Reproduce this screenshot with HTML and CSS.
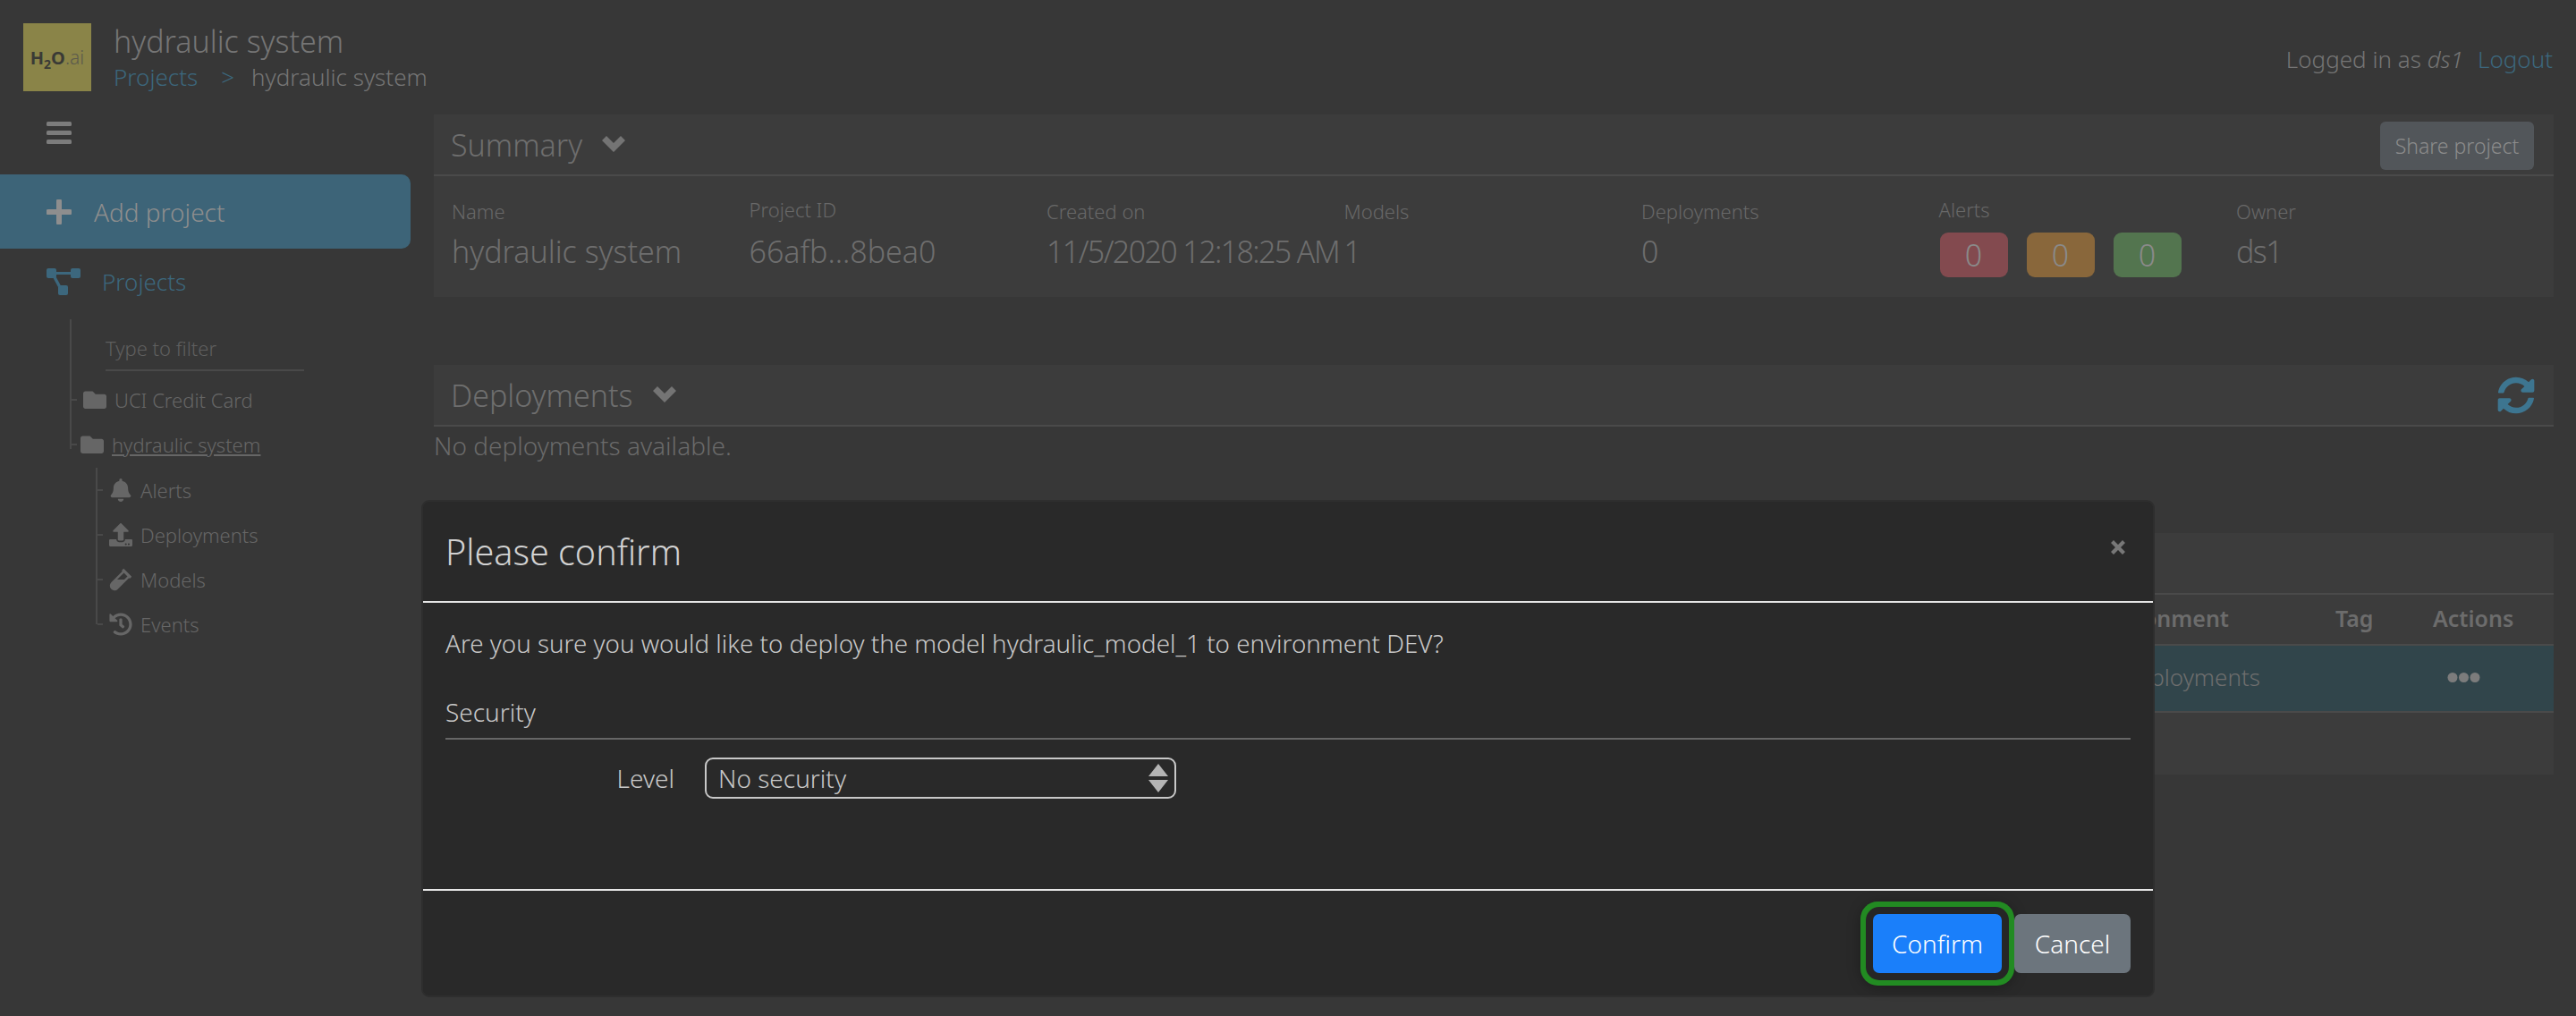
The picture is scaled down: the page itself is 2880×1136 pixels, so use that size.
FILE: index.html
```html
<!DOCTYPE html>
<html>
<head>
    <title>hydraulic system</title>
    <link rel="stylesheet" href="styles.css">
</head>
<body>
<!-- Top bar -->
<header class="topbar">
    <div class="logo"><b>H<sub>2</sub>O</b><span>.ai</span></div>
    <div class="titles">
        <div class="app-title">hydraulic system</div>
        <div class="crumbs"><a>Projects</a><a class="crumb-sep">&gt;</a><span>hydraulic system</span></div>
    </div>
    <div class="login">Logged in as <i>ds1</i><a>Logout</a></div>
</header>

<div class="layout">
    <!-- Sidebar -->
    <nav class="sidebar">
        <svg class="burger" viewBox="0 0 28 25"><rect y="0" width="28" height="5" rx="1.5"/><rect y="10" width="28" height="5" rx="1.5"/><rect y="20" width="28" height="5" rx="1.5"/></svg>
        <div class="add-project">
            <svg viewBox="0 0 28 28"><path d="M11 2a3 3 0 0 1 6 0v9h9a3 3 0 0 1 0 6h-9v9a3 3 0 0 1-6 0v-9H2a3 3 0 0 1 0-6h9z"/></svg>
            <span>Add project</span>
        </div>
        <div class="projects-link">
            <svg viewBox="0 0 38 30"><rect x="0" y="0" width="11" height="11" rx="2"/><rect x="27" y="0" width="11" height="11" rx="2"/><rect x="13" y="19" width="11" height="11" rx="2"/><path d="M8 4h22v3H8zM6 8l3-1.500 7 13-3 1.500z"/></svg>
            <span>Projects</span>
        </div>
        <div class="tree">
            <div class="filter"><span>Type to filter</span></div>
            <div class="tree-row"><i class="tick"></i><svg class="folder" viewBox="0 0 512 390"><path d="M464 70H272l-64-64H48C21.490 6 0 27.490 0 54v288c0 26.510 21.490 48 48 48h416c26.510 0 48-21.490 48-48V118c0-26.510-21.490-48-48-48z"/></svg><span>UCI Credit Card</span></div>
            <div class="tree-row row-current"><i class="tick"></i><svg class="folder" viewBox="0 0 512 390"><path d="M464 70H272l-64-64H48C21.490 6 0 27.490 0 54v288c0 26.510 21.490 48 48 48h416c26.510 0 48-21.490 48-48V118c0-26.510-21.490-48-48-48z"/></svg><u>hydraulic system</u></div>
        </div>
        <div class="subtree">
            <div class="tree-row"><i class="tick"></i><svg class="sub-icon" viewBox="0 0 448 512"><path d="M224 512c35.320 0 63.970-28.650 63.970-64H160.030c0 35.350 28.650 64 63.970 64zm215.390-149.710c-19.320-20.760-55.470-51.990-55.470-154.290 0-77.700-54.480-139.900-127.940-155.160V32c0-17.670-14.320-32-31.980-32s-31.980 14.330-31.980 32v20.840C118.560 68.100 64.080 130.300 64.080 208c0 102.300-36.150 133.530-55.470 154.290-6 6.450-8.660 14.160-8.610 21.710.11 16.400 12.980 32 32.100 32h383.800c19.120 0 32-15.600 32.100-32 .05-7.550-2.610-15.270-8.610-21.710z"/></svg><span>Alerts</span></div>
            <div class="tree-row"><i class="tick"></i><svg class="sub-icon" viewBox="0 0 512 512"><path d="M296 384h-80c-13.300 0-24-10.700-24-24V192h-87.700c-17.800 0-26.700-21.500-14.100-34.100L242.300 5.700c7.500-7.500 19.800-7.500 27.300 0l152.200 152.200c12.600 12.600 3.700 34.100-14.100 34.100H320v168c0 13.300-10.700 24-24 24zm216-8v112c0 13.300-10.700 24-24 24H24c-13.300 0-24-10.700-24-24V376c0-13.300 10.700-24 24-24h136v8c0 30.900 25.100 56 56 56h80c30.900 0 56-25.100 56-56v-8h136c13.300 0 24 10.700 24 24zm-124 88c0-11-9-20-20-20s-20 9-20 20 9 20 20 20 20-9 20-20zm64 0c0-11-9-20-20-20s-20 9-20 20 9 20 20 20 20-9 20-20z"/></svg><span>Deployments</span></div>
            <div class="tree-row"><i class="tick"></i><svg class="sub-icon" viewBox="0 0 480 512"><path d="M477.700 186.100L309.500 18.300c-3.100-3.100-8.200-3.100-11.300 0l-34 33.900c-3.100 3.100-3.100 8.200 0 11.300l11.200 11.100L33 316.500c-38.800 38.700-45.100 102-9.400 143.500 20.600 24 49.500 36 78.400 35.900 26.400 0 52.800-10 72.900-30.100l246.300-245.700 11.200 11.100c3.100 3.100 8.200 3.100 11.300 0l34-33.900c3.100-3 3.100-8.100-.1-11.200zM318 256H161l148-147.700 78.500 78.300L318 256z"/></svg><span>Models</span></div>
            <div class="tree-row"><i class="tick"></i><svg class="sub-icon" viewBox="0 0 512 512"><path d="M504 255.531c.253 136.640-111.180 248.372-247.820 248.468-59.015.042-113.223-20.530-155.822-54.911-11.077-8.940-11.905-25.541-1.839-35.607l11.267-11.267c8.609-8.609 22.353-9.551 31.891-1.984C173.062 425.135 212.781 440 256 440c101.705 0 184-82.311 184-184 0-101.705-82.311-184-184-184-48.814 0-93.149 18.969-126.068 49.932l50.754 50.754c10.080 10.080 2.941 27.314-11.313 27.314H24c-8.837 0-16-7.163-16-16V38.627c0-14.254 17.234-21.393 27.314-11.314l49.372 49.372C129.209 34.136 189.552 8 256 8c136.810 0 247.747 110.780 248 247.531zm-180.912 78.784l9.823-12.630c8.138-10.463 6.253-25.542-4.210-33.679L288 256.349V152c0-13.255-10.745-24-24-24h-16c-13.255 0-24 10.745-24 24v135.651l65.409 50.874c10.463 8.137 25.541 6.253 33.679-4.210z"/></svg><span>Events</span></div>
        </div>
    </nav>

    <!-- Main content -->
    <main class="content">
        <section class="panel summary">
            <div class="panel-head">
                <span class="panel-title">Summary</span>
                <svg class="chevron" viewBox="0 0 26 18"><path d="M0 5l5-5 8 8 8-8 5 5-13 13z"/></svg>
                <button class="share">Share project</button>
            </div>
            <div class="facts">
                <div><label>Name</label><div class="value">hydraulic system</div></div>
                <div><label class="label-up">Project ID</label><div class="value">66afb...8bea0</div></div>
                <div><label>Created on</label><div class="value value-date">11/5/2020 12:18:25 AM</div></div>
                <div><label>Models</label><div class="value">1</div></div>
                <div><label>Deployments</label><div class="value">0</div></div>
                <div>
                    <label class="label-up">Alerts</label>
                    <div class="badges"><span class="badge red">0</span><span class="badge orange">0</span><span class="badge green">0</span></div>
                </div>
                <div><label>Owner</label><div class="value value-owner">ds1</div></div>
            </div>
        </section>

        <section class="deployments">
            <div class="panel-head panel">
                <span class="panel-title">Deployments</span>
                <svg class="chevron" viewBox="0 0 26 18"><path d="M0 5l5-5 8 8 8-8 5 5-13 13z"/></svg>
                <svg class="refresh" viewBox="0 0 512 512"><path d="M370.720 133.280C339.458 104.008 298.888 87.962 255.848 88c-77.458.068-144.328 53.178-162.791 126.850-1.344 5.363-6.122 9.150-11.651 9.150H24.103c-7.498 0-13.194-6.807-11.807-14.176C33.933 94.924 134.813 8 256 8c66.448 0 126.791 26.136 171.315 68.685L463.030 40.970C478.149 25.851 504 36.559 504 57.941V192c0 13.255-10.745 24-24 24H345.941c-21.382 0-32.090-25.851-16.971-40.971l41.750-41.749zM32 296h134.059c21.382 0 32.090 25.851 16.971 40.971l-41.750 41.750c31.262 29.273 71.835 45.319 114.876 45.280 77.418-.07 144.315-53.144 162.787-126.849 1.344-5.363 6.122-9.150 11.651-9.150h57.304c7.498 0 13.194 6.807 11.807 14.176C478.067 417.076 377.187 504 256 504c-66.448 0-126.791-26.136-171.315-68.685L48.970 471.030C33.851 486.149 8 475.441 8 454.059V320c0-13.255 10.745-24 24-24z"/></svg>
            </div>
            <p class="empty">No deployments available.</p>
        </section>

        <section class="panel models">
            <div class="models-head"></div>
            <div class="models-row models-th">
                <div class="col-env">Environment</div><div class="col-tag">Tag</div><div class="col-act">Actions</div>
            </div>
            <div class="models-row models-td">
                <div class="col-env">Deployments</div><div class="col-tag"></div>
                <div class="col-act"><svg class="dots" viewBox="0 0 37 13"><circle cx="6" cy="6.500" r="5.500"/><circle cx="18.500" cy="6.500" r="5.500"/><circle cx="31" cy="6.500" r="5.500"/></svg></div>
            </div>
        </section>
    </main>
</div>

<!-- Confirm dialog -->
<div class="modal">
    <div class="modal-head">
        <h5>Please confirm</h5>
        <svg class="close" viewBox="0 0 18 18"><path d="M1 4l3-3 5 5 5-5 3 3-5 5 5 5-3 3-5-5-5 5-3-3 5-5z"/></svg>
    </div>
    <div class="modal-body">
        <p>Are you sure you would like to deploy the model hydraulic_model_1 to environment DEV?</p>
        <div class="legend">Security</div>
        <div class="form-row">
            <label>Level</label>
            <div class="select">
                <span>No security</span>
                <svg viewBox="0 0 24 34"><path d="M12 1l11 14H1zM1 19h22L12 33z"/></svg>
            </div>
        </div>
    </div>
    <div class="modal-foot">
        <button class="btn btn-confirm">Confirm</button>
        <button class="btn btn-cancel">Cancel</button>
    </div>
</div>
</body>
</html>
```

FILE: styles.css
```css
body {
    margin: 0;
    height: 1136px;
    overflow: hidden;
    background: #373737;
    color: #757575;
    font-family: "Noto Sans", "Open Sans", sans-serif;
    font-size: 26px;
    font-weight: 300;
}

a { color: #3c677d; }

/* Top bar */
.topbar {
    height: 128px;
    display: flex;
    align-items: flex-start;
    box-sizing: border-box;
    padding: 26px 26px 0 26px;
}

.logo {
    width: 76px;
    height: 76px;
    background: #8a8448;
    color: #3a3a36;
    display: flex;
    align-items: center;
    justify-content: center;
    font-size: 20px;
    box-sizing: border-box;
}

.logo b { font-weight: 700; }
.logo sub { font-size: 14px; line-height: 0; }
.logo span { color: #5c5b4c; font-size: 21px; }

.titles { margin-left: 25px; margin-top: -2px; }
.app-title { font-size: 34px; line-height: 44px; }
.crumbs { display: flex; line-height: 36px; }
.crumb-sep { margin: 0 19px 0 26px; }

.login { margin-left: auto; margin-top: 22px; margin-right: 0; white-space: nowrap; }
.login a { margin-left: 16px; }

.layout { display: flex; }

/* Sidebar */
.sidebar { width: 485px; flex: none; }
.sidebar svg { fill: currentColor; }

.burger { display: block; width: 28px; height: 25px; margin: 8px 0 34px 52px; color: #7c7c7c; }

.add-project {
    width: 459px;
    height: 83px;
    background: #3d6478;
    border-radius: 0 10px 10px 0;
    display: flex;
    align-items: center;
    padding-left: 52px;
    box-sizing: border-box;
    color: #8e8e8e;
    font-size: 28px;
}

.add-project svg { width: 28px; height: 28px; margin-right: 25px; }

.projects-link {
    display: flex;
    align-items: center;
    height: 30px;
    margin: 22px 0 0 52px;
    color: #3c677d;
}

.projects-link svg { width: 38px; height: 30px; margin-right: 24px; }

.tree {
    margin: 27px 0 0 78px;
    width: 280px;
    height: 145px;
    border-left: 2px solid #494949;
    box-sizing: border-box;
    color: #666;
    font-size: 22px;
}

.filter {
    margin-left: 38px;
    width: 222px;
    height: 58px;
    box-sizing: border-box;
    border-bottom: 2px solid #494949;
    padding-top: 16px;
    line-height: 32px;
    color: #5f5f5f;
}

.tree-row { display: flex; align-items: center; height: 50px; white-space: nowrap; }
.tick { width: 6px; height: 2px; background: #494949; margin-right: 7px; flex: none; }
.folder { width: 26px; height: 20px; margin-right: 9px; flex: none; }
.row-current .tick { margin-right: 4px; }
.tree .filter + .tree-row { margin-top: 7px; }

.subtree {
    margin: 21px 0 0 107px;
    height: 175px;
    width: 280px;
    border-left: 2px solid #494949;
    color: #666;
    font-size: 22px;
    box-sizing: border-box;
}

.sub-icon { width: 26px; height: 26px; margin-right: 9px; flex: none; }

/* Main */
.content { width: 2370px; flex: none; }

.panel { background: #3c3c3c; }

.panel-head {
    height: 69px;
    display: flex;
    align-items: center;
    box-sizing: border-box;
    padding: 0 22px 0 19px;
    border-bottom: 2px solid #4a4a4a;
}

.panel-title { font-size: 34px; color: #6e6e6e; }
.chevron { width: 26px; height: 18px; margin-left: 22px; margin-top: -2px; fill: #747474; }

.summary { height: 204px; }

.share {
    margin-left: auto;
    margin-top: 2px;
    width: 172px;
    height: 54px;
    border: none;
    border-radius: 6px;
    background: #52565a;
    color: #8c8c8c;
    font: inherit;
    font-size: 23px;
    padding: 0;
}

.facts {
    display: grid;
    grid-template-columns: repeat(7, 332.500px);
    padding: 24px 0 0 20px;
    white-space: nowrap;
}

.facts label { display: block; height: 30px; line-height: 30px; font-size: 22px; color: #686868; }
.facts .label-up { position: relative; top: -2px; }
.value { font-size: 34px; line-height: 46px; margin-top: 7px; color: #6e6e6e; }
.value-date { letter-spacing: -1.600px; }
.value-owner { letter-spacing: -1.500px; }

.badges { display: flex; margin: 9px 0 0 1px; }
.badge {
    width: 76px;
    height: 50px;
    line-height: 50px;
    border-radius: 9px;
    text-align: center;
    font-size: 34px;
    color: #8a8a8a;
    margin-right: 21px;
}
.red { background: #834a4f; }
.orange { background: #89673b; }
.green { background: #53754f; }

.deployments { margin-top: 76px; height: 188px; }
.refresh { width: 42px; height: 42px; margin-left: auto; margin-right: -1px; fill: #3d7590; }
.empty { margin: 3px 0 0 0; line-height: 36px; color: #6a6a6a; font-size: 28px; }

.models { height: 270px; }
.models-head { height: 69px; box-sizing: border-box; border-bottom: 2px solid #4a4a4a; }
.models-row { display: flex; box-sizing: border-box; align-items: center; white-space: nowrap; padding-bottom: 3px; }
.models-th { height: 57px; font-weight: 600; font-size: 25px; color: #6c6c6c; border-bottom: 2px solid #4a4a4a; }
.models-th .col-env { padding-right: 35px; box-sizing: border-box; }
.models-td { height: 75px; background: #31454b; border-bottom: 2px solid #4a4a4a; color: #6e6e6e; }
.col-env { width: 2042px; text-align: right; }
.col-tag { width: 109px; margin-left: 84px; }
.col-act { width: 135px; }
.dots { display: block; width: 37px; height: 13px; margin-left: 16px; fill: #7c7c7c; }

/* Dialog */
.modal {
    position: absolute;
    left: 471px;
    top: 559px;
    width: 1938px;
    height: 556px;
    box-sizing: border-box;
    border: 2px solid #2e2e2e;
    border-radius: 9px;
    background: #292929;
    color: #c8c8c8;
    display: flex;
    flex-direction: column;
}

.modal-head {
    height: 113px;
    flex: none;
    box-sizing: border-box;
    border-bottom: 2px solid #e6e6e6;
    display: flex;
    align-items: center;
    padding: 0 30px 0 25px;
}

.modal-head h5 { margin: 1px 0 0 0; font-size: 39.500px; font-weight: 300; color: #d2d2d2; }
.close { width: 18px; height: 18px; margin-left: auto; margin-top: -10px; fill: #777; }

.modal-body { flex: 1; padding: 0 25px; font-size: 28px; }
.modal-body p { margin: 27px 0 0 0; line-height: 36px; font-size: 27.770px; }
.legend { margin-top: 38px; height: 50px; line-height: 42px; border-bottom: 2px solid #666; }
.form-row { display: flex; align-items: center; margin-top: 20px; }
.form-row label { width: 256px; text-align: right; }
.select {
    margin-left: 34px;
    width: 527px;
    height: 46px;
    box-sizing: border-box;
    border: 2px solid #c8c8c8;
    border-radius: 9px;
    display: flex;
    align-items: center;
    justify-content: space-between;
    padding: 0 6px 0 13px;
}
.select svg { width: 24px; height: 34px; fill: #b4b4b4; }

.modal-foot {
    height: 119px;
    flex: none;
    box-sizing: border-box;
    border-top: 2px solid #e6e6e6;
    display: flex;
    align-items: center;
    justify-content: flex-end;
    gap: 14px;
    padding: 0 25px 0 0;
}

.btn {
    height: 66px;
    border: none;
    border-radius: 7px;
    color: #fff;
    font: inherit;
    font-size: 28px;
    padding: 0;
}
.btn-confirm {
    width: 144px;
    background: #1a7ffa;
    box-shadow: 0 0 0 8px #262626, 0 0 0 14px #228b22, 0 2px 16px 12px rgba(0, 0, 0, .4);
}
.btn-cancel { width: 130px; background: #6c757d; }
```
